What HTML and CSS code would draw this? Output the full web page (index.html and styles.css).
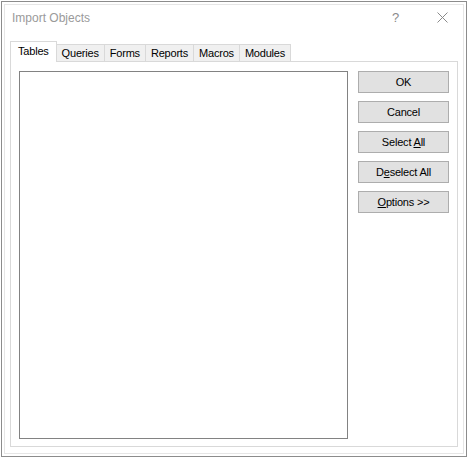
FILE: index.html
```html
<!DOCTYPE html>
<html>
<head>
<meta charset="utf-8">
<link rel="stylesheet" href="styles.css">
</head>
<body>
<div class="window">
  <div class="titlebar">
    <span class="title">Import Objects</span>
    <span class="help">?</span>
    <span class="close">
      <svg width="11" height="11" viewBox="0 0 11 11"><path d="M0.5 0.5L10.5 10.5M10.5 0.5L0.5 10.5" stroke="#8a8a8a" stroke-width="1" fill="none"/></svg>
    </span>
  </div>
  <div class="body">
    <div class="tabs">
      <div class="tab selected">Tables</div>
      <div class="tab">Queries</div>
      <div class="tab">Forms</div>
      <div class="tab">Reports</div>
      <div class="tab">Macros</div>
      <div class="tab">Modules</div>
    </div>
    <div class="panel">
      <div class="listbox"></div>
      <div class="buttons">
        <button class="btn">OK</button>
        <button class="btn">Cancel</button>
        <button class="btn">Select <u>A</u>ll</button>
        <button class="btn">D<u>e</u>select All</button>
        <button class="btn"><u>O</u>ptions &gt;&gt;</button>
      </div>
    </div>
  </div>
</div>
</body>
</html>
```

FILE: styles.css
```css
html, body {
  margin: 0;
  padding: 0;
  background: #ffffff;
}
body {
  width: 469px;
  height: 458px;
  font-family: "Liberation Sans", Arial, sans-serif;
}
.window {
  box-sizing: border-box;
  margin: 1px 0 0 1px;
  width: 466px;
  height: 456px;
  border: 1px solid #8c8c8c;
  background: #ffffff;
  display: flex;
  flex-direction: column;
  box-shadow: inset 0 0 0 2px #ffffff, inset 0 0 0 3px #e6e6e6;
}
.titlebar {
  height: 32px;
  display: flex;
  align-items: center;
  padding-left: 10px;
  flex: none;
}
.title {
  font-size: 12px;
  color: #9a9a9a;
  flex: 1;
  margin-top: -1px;
}
.help {
  font-size: 13px;
  color: #8a8a8a;
  width: 12px;
  margin-right: 33px;
  margin-top: -1px;
}
.close {
  display: flex;
  margin-right: 18px;
  margin-top: -1px;
}
.body {
  flex: 1;
  display: flex;
  flex-direction: column;
  padding: 7px 8px 9px 8px;
}
.tabs {
  display: flex;
  height: 20px;
  align-items: flex-end;
  position: relative;
  z-index: 1;
}
.tab {
  box-sizing: border-box;
  height: 17px;
  border: 1px solid #d9d9d9;
  border-bottom: none;
  border-left: none;
  background: #f0f0f0;
  font-size: 11px;
  letter-spacing: -0.2px;
  color: #000;
  padding: 0 5px;
  line-height: 17px;
  text-align: center;
}
.tab.selected {
  height: 21px;
  margin-bottom: -1px;
  border-left: 1px solid #d9d9d9;
  background: #ffffff;
  line-height: 19px;
  padding: 0 7px;
}
.panel {
  flex: 1;
  box-sizing: border-box;
  border: 1px solid #d9d9d9;
  display: flex;
  padding: 9px 8px 7px 8px;
  gap: 10px;
}
.listbox {
  box-sizing: border-box;
  width: 329px;
  border: 1px solid #828282;
  background: #fff;
}
.buttons {
  display: flex;
  flex-direction: column;
  gap: 8px;
}
.btn {
  box-sizing: border-box;
  width: 91px;
  height: 22px;
  border: 1px solid #adadad;
  background: #e1e1e1;
  font-family: "Liberation Sans", Arial, sans-serif;
  font-size: 11px;
  letter-spacing: -0.2px;
  color: #000;
  padding: 0;
  margin: 0;
}
.btn u {
  text-decoration-thickness: 1px;
}
```
